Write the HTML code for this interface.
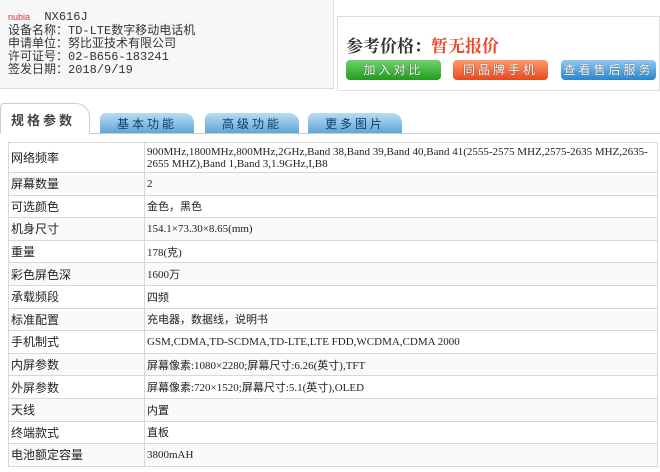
<!DOCTYPE html>
<html><head><meta charset="utf-8"><style>
body{margin:0;width:660px;height:472px;background:#fff;font-family:"Liberation Serif","Noto Serif CJK SC",serif;overflow:hidden;position:relative;font-size:12px;color:#222}
.abs{position:absolute}
.left{left:0;top:0;width:333px;height:88px;background:#f7f7f7;border-right:1px solid #ddd;border-bottom:1px solid #ddd}
.info{left:8px;top:9px;font-family:"Liberation Mono","Noto Sans CJK SC",monospace;font-size:12px;line-height:13px;color:#333}
.right{left:337px;top:16px;width:321px;height:73px;border:1px solid #ddd;background:#fff}
.btn{position:absolute;top:43px;width:95px;height:20px;border-radius:4px;color:#fff;font-family:"Liberation Sans","Noto Sans CJK SC",sans-serif;font-size:12px;letter-spacing:3px;text-align:center;line-height:20px;text-shadow:0 0 1px #333}
.tab{position:absolute;top:113px;height:20px;width:94px;background:linear-gradient(#b9dcf3,#5fa6d8);border-radius:6px 10px 0 0;font-family:"Liberation Sans","Noto Sans CJK SC",sans-serif;font-size:12px;letter-spacing:3px;text-align:center;line-height:22px;color:#0d3e6a}
table{position:absolute;left:8px;top:142px;width:650px;border-collapse:collapse;font-family:"Liberation Serif","Noto Sans CJK SC",serif;font-size:11px}
td{border:1px solid #d8d8d8;height:21.6px;padding:0 2px;vertical-align:middle}
td:first-child{width:131px;font-size:12px}
tr:nth-child(even) td{background:#fafafa}
</style></head><body>
<div class="abs left"></div>
<div class="abs info"><div style="height:16px;line-height:16px"><span style="color:#d33;font-size:9px;font-family:'Liberation Sans',sans-serif">nubia</span>&nbsp;&nbsp;NX616J</div>设备名称：TD-LTE数字移动电话机<br>申请单位：努比亚技术有限公司<br>许可证号：02-B656-183241<br>签发日期：2018/9/19</div>
<div class="abs right">
<div class="abs" style="left:8px;top:15px;font-size:17px;font-weight:bold;color:#333">参考价格：<span style="color:#e8472a">暂无报价</span></div>
<div class="btn" style="left:8px;background:linear-gradient(#6fd36b,#239a1f)">加入对比</div>
<div class="btn" style="left:115px;background:linear-gradient(#ff9a6a,#e8481d)">同品牌手机</div>
<div class="btn" style="left:223px;background:linear-gradient(#8fcaf0,#2a85cf)">查看售后服务</div>
</div>
<div class="abs" style="left:0;top:133px;width:660px;border-top:1px solid #ccc"></div>
<div class="abs" style="left:0;top:103px;height:31px;background:#fff;border:1px solid #ccc;border-bottom:none;border-radius:4px 14px 0 0;font-family:'Liberation Sans','Noto Sans CJK SC',sans-serif;font-size:13px;font-weight:bold;letter-spacing:3px;color:#444;line-height:34px;padding-left:10px;box-sizing:border-box;width:90px">规格参数</div>
<div class="tab" style="left:100px">基本功能</div>
<div class="tab" style="left:205px">高级功能</div>
<div class="tab" style="left:308px">更多图片</div>
<table>
<tr><td style="height:29px">网络频率</td><td style="line-height:12px">900MHz,1800MHz,800MHz,2GHz,Band 38,Band 39,Band 40,Band 41(2555-2575 MHZ,2575-2635 MHZ,2635-2655 MHZ),Band 1,Band 3,1.9GHz,I,B8</td></tr>
<tr><td>屏幕数量</td><td>2</td></tr>
<tr><td>可选颜色</td><td>金色，黑色</td></tr>
<tr><td>机身尺寸</td><td>154.1×73.30×8.65(mm)</td></tr>
<tr><td>重量</td><td>178(克)</td></tr>
<tr><td>彩色屏色深</td><td>1600万</td></tr>
<tr><td>承载频段</td><td>四频</td></tr>
<tr><td>标准配置</td><td>充电器，数据线，说明书</td></tr>
<tr><td>手机制式</td><td>GSM,CDMA,TD-SCDMA,TD-LTE,LTE FDD,WCDMA,CDMA 2000</td></tr>
<tr><td>内屏参数</td><td>屏幕像素:1080×2280;屏幕尺寸:6.26(英寸),TFT</td></tr>
<tr><td>外屏参数</td><td>屏幕像素:720×1520;屏幕尺寸:5.1(英寸),OLED</td></tr>
<tr><td>天线</td><td>内置</td></tr>
<tr><td>终端款式</td><td>直板</td></tr>
<tr><td>电池额定容量</td><td>3800mAH</td></tr>
</table>
</body></html>
